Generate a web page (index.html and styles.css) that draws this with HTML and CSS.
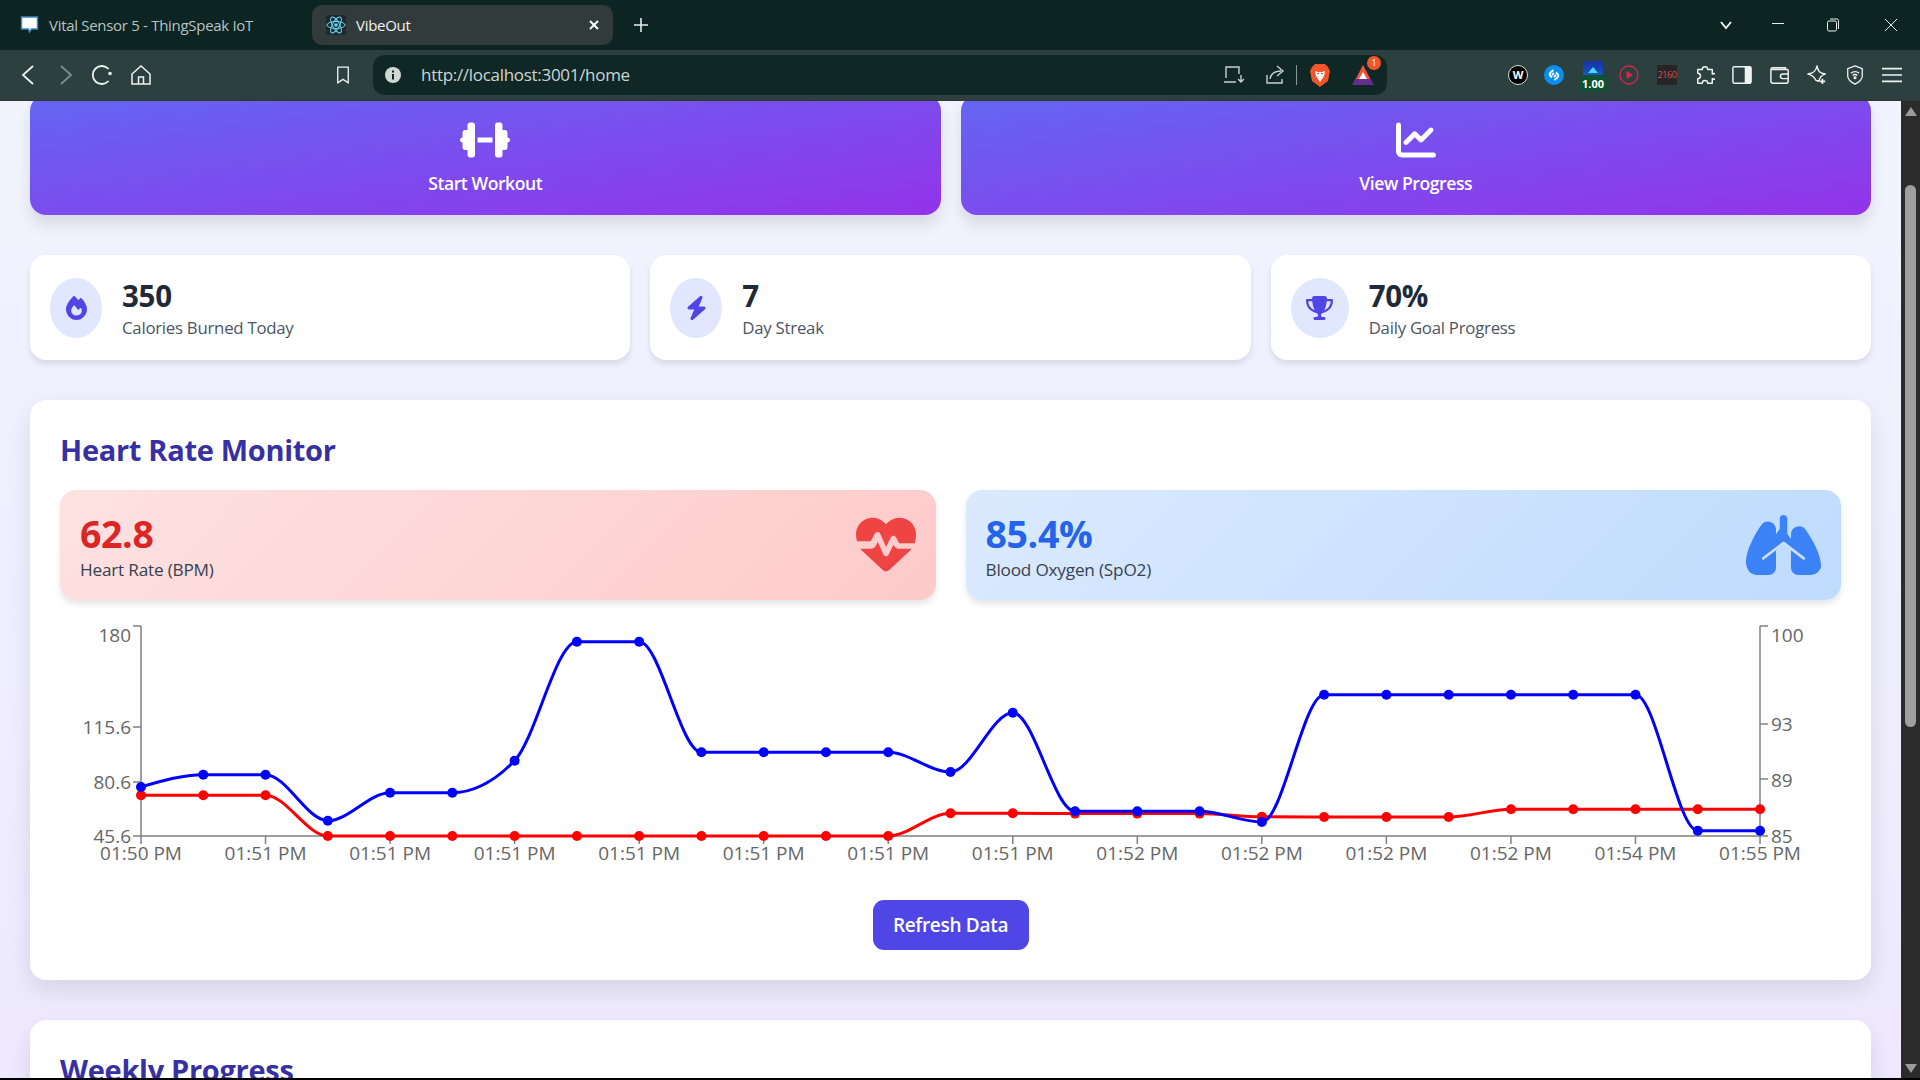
FILE: index.html
```html
<!DOCTYPE html>
<html lang="en">
<head>
  <meta charset="UTF-8">
  <meta name="viewport" content="width=device-width, initial-scale=1.0">
  <title>VibeOut</title>
  <link rel="stylesheet" href="styles.css">
</head>
<body>
<div class="browser">
  <div class="tabbar">
    <div class="tab">
      <svg class="favicon" viewBox="0 0 18 18"><path d="M1 1h16v12h-6l-2 3-1-3H1z" fill="#fff" stroke="#3f83c8" stroke-width="1.4"/></svg>
      <span>Vital Sensor 5 - ThingSpeak IoT</span>
    </div>
    <div class="tab tab-active">
      <svg class="favicon-react" viewBox="0 0 20 20" fill="none" stroke="#61dafb" stroke-width="1">
        <rect width="20" height="20" rx="2" fill="#20282b" stroke="none"/>
        <ellipse cx="10" cy="10" rx="9" ry="3.5"/>
        <ellipse cx="10" cy="10" rx="9" ry="3.5" transform="rotate(60 10 10)"/>
        <ellipse cx="10" cy="10" rx="9" ry="3.5" transform="rotate(120 10 10)"/>
        <circle cx="10" cy="10" r="1.8" fill="#61dafb" stroke="none"/>
      </svg>
      <span class="tab-title">VibeOut</span>
      <svg class="tab-close" viewBox="0 0 12 12" stroke="#fff" stroke-width="2"><path d="M2 2l8 8M10 2l-8 8"/></svg>
    </div>
    <svg class="new-tab" viewBox="0 0 14 14" stroke="#e8ecec" stroke-width="1.6"><path d="M7 0v14M0 7h14"/></svg>
    <div class="window-controls">
      <svg class="win-icon" viewBox="0 0 14 14" fill="none" stroke="#fff" stroke-width="1.8"><path d="M2 4l5 6 5-6"/></svg>
      <svg class="win-icon" viewBox="0 0 14 14" fill="none" stroke="#e8ecec" stroke-width="1"><path d="M1 5.5h12"/></svg>
      <svg class="win-icon" viewBox="0 0 14 14" fill="none" stroke="#e8ecec" stroke-width="1"><rect x="1.5" y="3" width="9" height="10" rx="1.5"/><path d="M4 1h7a1.500 1.500 0 0 1 1.500 1.500V11"/></svg>
      <svg class="win-icon" viewBox="0 0 14 14" fill="none" stroke="#e8ecec" stroke-width="1"><path d="M1 1l12 12M13 1L1 13"/></svg>
    </div>
  </div>

  <div class="toolbar">
    <div class="nav-group">
      <svg class="nav-icon" viewBox="0 0 22 22" fill="none" stroke="#f0f2f2" stroke-width="1.8"><path d="M16 2L6 11l10 9"/></svg>
      <svg class="nav-icon" viewBox="0 0 22 22" fill="none" stroke="#7f8e8c" stroke-width="1.8"><path d="M6 2l10 9-10 9"/></svg>
      <svg class="nav-icon nav-reload" viewBox="0 0 22 22" fill="none" stroke="#f0f2f2" stroke-width="1.8"><path d="M17.500 17a9 9 0 1 1 0-12"/><circle cx="19" cy="9.500" r="1.800" fill="#f0f2f2" stroke="none"/></svg>
      <svg class="nav-icon" viewBox="0 0 22 22" fill="none" stroke="#f0f2f2" stroke-width="1.500"><path d="M2 10l9-8 9 8v10H2zM8.500 20v-7h5v7"/></svg>
    </div>
    <svg class="bookmark" viewBox="0 0 16 20" fill="none" stroke="#f0f2f2" stroke-width="1.500"><path d="M2 1h12v18l-6-4-6 4z"/></svg>
    <div class="urlbar">
      <svg class="info-icon" viewBox="0 0 16 16"><circle cx="8" cy="8" r="8" fill="#d2d7d6"/><path d="M7 7h2v5.500H7zM7 3.500h2v2H7z" fill="#0f2725"/></svg>
      <span class="url-text">http://localhost:3001/home</span>
      <div class="url-actions">
        <svg class="url-icon url-install" viewBox="0 0 22 20" fill="none" stroke="#c9d0cf" stroke-width="1.400"><path d="M3 13V2h13v7M1 17h12M18 10v7m-3-3l3 3 3-3"/></svg>
        <svg class="url-icon" viewBox="0 0 22 20" fill="none" stroke="#c9d0cf" stroke-width="1.400"><path d="M2 10v8h15v-4M5 14c1-6 5-8 11-8M12 1l6 5-6 5"/></svg>
        <span class="url-sep"></span>
        <svg class="brave-icon" viewBox="0 0 20 24"><path d="M5 1h10l3 3 2 4-2 10-8 6-8-6L0 8l2-4z" fill="#f1562b"/><path d="M5 8l3 1h4l3-1-1 5-2 3-2 3-2-3-2-3z" fill="#fff"/><path d="M7 10.500h2M11 10.500h2" stroke="#f1562b" stroke-width="1.200"/></svg>
        <div class="bat-wrap">
          <svg class="bat-icon" viewBox="0 0 22 20"><path d="M11 0l11 20H0z" fill="#662d91"/><path d="M11 0L4 14h14z" fill="#f1562b"/><path d="M11 7l-4 7h8z" fill="#fff"/></svg>
          <span class="bat-badge">1</span>
        </div>
      </div>
    </div>
    <div class="ext-group">
      <div class="ext-w">W</div>
      <svg class="ext-svg ext-shazam" viewBox="0 0 20 20"><circle cx="10" cy="10" r="10" fill="#0c8df0"/><path d="M8 12.500L6.500 11a2.500 2.500 0 0 1 0-3.500L9.500 5M12 7.500L13.500 9a2.500 2.500 0 0 1 0 3.500L10.500 15M8 10l2-2M10 12l2-2" fill="none" stroke="#fff" stroke-width="1.800"/></svg>
      <div class="ext-hdr">
        <span class="ext-hdr-top"></span>
        <span class="ext-hdr-num">1.00</span>
      </div>
      <svg class="ext-svg ext-play" viewBox="0 0 20 20"><circle cx="10" cy="10" r="9" fill="none" stroke="#e0244f" stroke-width="1.300"/><path d="M7.500 6l6.500 4-6.500 4z" fill="#e0244f"/></svg>
      <div class="ext-res">2160</div>
      <svg class="ext-svg" viewBox="0 0 22 22" fill="none" stroke="#f0f2f2" stroke-width="1.600"><path d="M8 5a3 3 0 1 1 6 0h5v5a3 3 0 1 1 0 5v5h-5a3 3 0 1 0-6 0H3v-5a3 3 0 1 0 0-6V5z" stroke-linejoin="round"/></svg>
      <svg class="ext-svg" viewBox="0 0 22 20"><rect x="1" y="1" width="20" height="18" rx="1.500" fill="none" stroke="#f0f2f2" stroke-width="1.600"/><rect x="14" y="1" width="7" height="18" fill="#f0f2f2"/></svg>
      <svg class="ext-svg" viewBox="0 0 22 20" fill="none" stroke="#f0f2f2" stroke-width="1.600"><path d="M17 4V2H3a2 2 0 0 0-2 2v13a2 2 0 0 0 2 2h15a2 2 0 0 0 2-2V5a1 1 0 0 0-1-1H2"/><path d="M20 9h-6a2.500 2.500 0 0 0 0 5h6"/></svg>
      <svg class="ext-svg" viewBox="0 0 22 22" fill="none" stroke="#f0f2f2" stroke-width="1.600"><path d="M11 1c1 6 3 8 9 9-4 1-6 3-7 8-1-1-2-1-3-1C8 13 6 11 1 10c6-1 9-3 10-9z" stroke-linejoin="round"/><path d="M17 15v6M14 18h6" stroke-width="1.800"/></svg>
      <svg class="ext-svg" viewBox="0 0 20 22" fill="none" stroke="#f0f2f2" stroke-width="1.400"><path d="M10 1l8 3v8c0 4-4 7-8 9-4-2-8-5-8-9V4z"/><path d="M5.500 9a6.500 6.500 0 0 1 9 0M7.500 11.500a3.500 3.500 0 0 1 5 0"/><circle cx="10" cy="14" r="1" fill="#f0f2f2"/></svg>
      <svg class="ext-svg" viewBox="0 0 22 18" stroke="#f0f2f2" stroke-width="1.800"><path d="M0 2h22M0 9h22M0 16h22"/></svg>
    </div>
  </div>

  <div class="viewport">
    <div class="page">
      <div class="content">
        <div class="actions">
          <div class="action-card">
            <svg class="action-icon" viewBox="0 0 640 512" fill="#fff"><path d="M96 64c0-17.700 14.300-32 32-32h32c17.700 0 32 14.300 32 32V224v64V448c0 17.700-14.300 32-32 32H128c-17.700 0-32-14.300-32-32V384H64c-17.700 0-32-14.300-32-32V288c-17.700 0-32-14.300-32-32s14.300-32 32-32V160c0-17.700 14.300-32 32-32H96V64zm448 0v64h32c17.700 0 32 14.300 32 32v64c17.700 0 32 14.300 32 32s-14.300 32-32 32v64c0 17.700-14.300 32-32 32H544v64c0 17.700-14.300 32-32 32H480c-17.700 0-32-14.300-32-32V288 224 64c0-17.700 14.300-32 32-32h32c17.700 0 32 14.300 32 32zM416 224v64H224V224H416z"/></svg>
            <span class="action-label">Start Workout</span>
          </div>
          <div class="action-card">
            <svg class="action-icon" viewBox="0 0 512 512" fill="#fff"><path d="M64 64c0-17.700-14.300-32-32-32S0 46.300 0 64V400c0 44.200 35.800 80 80 80H480c17.700 0 32-14.300 32-32s-14.300-32-32-32H80c-8.800 0-16-7.200-16-16V64zm406.600 86.600c12.500-12.500 12.500-32.800 0-45.300s-32.800-12.500-45.300 0L320 210.700l-57.400-57.400c-12.500-12.500-32.800-12.500-45.300 0l-112 112c-12.500 12.500-12.500 32.800 0 45.300s32.800 12.500 45.300 0L240 221.300l57.400 57.400c12.500 12.500 32.800 12.500 45.300 0l128-128z"/></svg>
            <span class="action-label">View Progress</span>
          </div>
        </div>

        <div class="stats">
          <div class="stat-card">
            <div class="stat-icon stat-icon-narrow">
              <svg class="stat-glyph" viewBox="0 0 448 512" fill="#4f46e5"><path d="M159.300 5.400c7.800-7.300 19.900-7.200 27.700 .1c27.600 25.900 53.500 53.800 77.700 84c11-14.400 23.500-30.100 37-42.900c7.900-7.400 20.100-7.400 28 .1c34.600 33 63.900 76.600 84.500 118c20.300 40.800 33.800 82.500 33.800 111.900C448 404.200 348.200 512 224 512C98.400 512 0 404.100 0 276.500c0-38.400 17.800-85.300 45.400-131.700C73.300 97.700 112.700 48.600 159.300 5.400zM225.700 416c25.300 0 47.700-7 68.800-21c42.100-29.400 53.400-88.200 28.100-134.400c-4.500-9-16-9.600-22.500-2l-25.200 29.300c-6.600 7.600-18.500 7.400-24.700-.5c-16.500-21-46-58.500-62.800-79.800c-6.300-8-18.300-8.100-24.700-.1c-33.800 42.500-50.800 69.300-50.800 99.400C112 375.400 162.600 416 225.700 416z"/></svg>
            </div>
            <div class="stat-text">
              <div class="stat-value">350</div>
              <div class="stat-label">Calories Burned Today</div>
            </div>
          </div>
          <div class="stat-card">
            <div class="stat-icon stat-icon-narrow">
              <svg class="stat-glyph" viewBox="0 0 448 512" fill="#4f46e5"><path d="M349.400 44.600c5.900-13.700 1.500-29.700-10.600-38.500s-28.600-8-39.900 1.800l-256 224c-10 8.800-13.600 22.900-8.900 35.300S50.700 288 64 288H175.500L98.600 467.400c-5.900 13.700-1.500 29.700 10.600 38.500s28.600 8 39.900-1.800l256-224c10-8.800 13.600-22.900 8.900-35.300s-18.600-19.300-31.900-19.300H272.500L349.400 44.600z"/></svg>
            </div>
            <div class="stat-text">
              <div class="stat-value">7</div>
              <div class="stat-label">Day Streak</div>
            </div>
          </div>
          <div class="stat-card">
            <div class="stat-icon stat-icon-wide">
              <svg class="stat-glyph" viewBox="0 0 576 512" fill="#4f46e5"><path d="M400 0H176c-26.500 0-48.100 21.800-47.100 48.200c.2 5.300 .4 10.600 .7 15.800H24C10.700 64 0 74.700 0 88c0 92.600 33.500 157 78.500 200.700c44.300 43.100 98.300 64.800 138.100 75.800c23.400 6.500 39.400 26 39.400 45.600c0 20.900-17 37.900-37.900 37.900H192c-17.700 0-32 14.300-32 32s14.300 32 32 32H384c17.700 0 32-14.300 32-32s-14.300-32-32-32H357.900C337 448 320 431 320 410.100c0-19.600 15.900-39.200 39.400-45.600c39.900-11 93.900-32.700 138.200-75.800C542.500 245 576 180.600 576 88c0-13.300-10.700-24-24-24H446.400c.3-5.200 .5-10.400 .7-15.800C448.100 21.800 426.500 0 400 0zM48.900 112h84.400c9.100 90.100 29.200 150.300 51.900 190.600c-24.900-11-50.800-26.500-73.200-48.300c-32-31.100-58-76-63-142.300zM464.100 254.300c-22.400 21.800-48.300 37.300-73.200 48.300c22.700-40.300 42.800-100.500 51.900-190.600h84.400c-5.100 66.300-31.100 111.200-63 142.300z"/></svg>
            </div>
            <div class="stat-text">
              <div class="stat-value">70%</div>
              <div class="stat-label">Daily Goal Progress</div>
            </div>
          </div>
        </div>

        <div class="card">
          <h2 class="card-title">Heart Rate Monitor</h2>
          <div class="vitals">
            <div class="vital vital-heart">
              <div>
                <div class="vital-value">62.8</div>
                <div class="vital-label">Heart Rate (BPM)</div>
              </div>
              <svg class="vital-icon" viewBox="0 0 512 512" fill="#ef4444"><path d="M228.300 469.100L47.600 300.400c-4.200-3.900-8.200-8.100-11.900-12.400h87c22.600 0 43-13.600 51.700-34.500l10.500-25.200 49.300 109.500c3.800 8.500 12.100 14 21.400 14.100s17.800-5 22-13.300L320 253.700l1.700 3.400c9.500 19 28.900 31 50.100 31H476.300c-3.700 4.300-7.700 8.500-11.900 12.400L283.700 469.100c-7.500 7-17.400 10.900-27.700 10.900s-20.200-3.900-27.700-10.900zM503.700 240h-132c-3 0-5.800-1.700-7.200-4.400l-23.200-46.300c-4.100-8.100-12.400-13.300-21.500-13.300s-17.400 5.100-21.500 13.300l-41.400 82.800L205.900 158.200c-3.900-8.700-12.700-14.200-22.200-14.100s-18.100 5.800-21.800 14.600L125.700 224H9.600C3.300 206.800 0 188.300 0 169.600v-5.800C0 94.900 49.800 36.100 117.700 24.800c44.900-7.500 90.600 7.200 122.800 39.400L256 79.600l15.500-15.400c32.200-32.200 77.900-46.900 122.800-39.400C462.200 36.100 512 94.900 512 163.800v5.800c0 24.900-5.800 49.300-8.300 70.400z"/></svg>
            </div>
            <div class="vital vital-oxygen">
              <div>
                <div class="vital-value">85.4%</div>
                <div class="vital-label">Blood Oxygen (SpO2)</div>
              </div>
              <svg class="vital-icon" viewBox="0 0 640 512">
                <path fill="#3b82f6" d="M320 0c17.700 0 32 14.300 32 32V160l32 45V165C384 127 415 96 453 96c22 0 43 10 56 29c15 22 44 65 71 117c26 51 52 112 58 168c1 8 2 17 2 25C640 472 598 512 545 512H448c-35 0-64-29-64-64V300l-64-60-64 60V448c0 35-29 64-64 64H95C42 512 0 472 0 395c0-8 1-17 2-25c6-56 32-117 58-168c27-52 56-95 71-117c13-19 34-29 56-29c38 0 69 31 69 69v40l32-45V32c0-17.700 14.300-32 32-32z"/>
                <path fill="none" stroke="#cbe0fe" stroke-width="22" stroke-linecap="round" stroke-linejoin="round" d="M147 370L320 238 493 370"/>
              </svg>
            </div>
          </div>
          <svg id="chart" class="chart" viewBox="0 0 1781 290"></svg>
          <div class="refresh-row">
            <button class="refresh-btn">Refresh Data</button>
          </div>
        </div>

        <div class="card">
          <h2 class="card-title">Weekly Progress</h2>
        </div>
      </div>
    </div>
    <div class="scrollbar">
      <span class="scroll-arrow scroll-up"></span>
      <div class="scroll-track"><span class="scroll-thumb"></span></div>
      <span class="scroll-arrow scroll-down"></span>
    </div>
  </div>
  <div class="bottom-edge"></div>
</div>
<script src="chart.js"></script>
</body>
</html>
```

FILE: styles.css
```css
* {
  box-sizing: border-box;
}
html, body {
  margin: 0;
  height: 100%;
  overflow: hidden;
}
body {
  font-family: "Open Sans", "Noto Sans", sans-serif;
  color: #1f2937;
}
svg {
  display: block;
  flex: none;
}
.browser {
  display: flex;
  flex-direction: column;
  height: 1080px;
}

/* browser chrome */
.tabbar {
  height: 50px;
  background: #0c2523;
  display: flex;
  align-items: center;
  padding-left: 12px;
  font-size: 15px;
}
.tab {
  width: 300px;
  height: 40px;
  display: flex;
  align-items: center;
  padding-left: 8px;
  color: #b8c3c1;
  border-radius: 10px;
  letter-spacing: -0.3px;
}
.tab-active {
  width: 301px;
  padding-left: 14px;
  background: #323b3b;
  color: #eef1f1;
}
.favicon {
  width: 19px;
  height: 18px;
  margin-right: 10px;
}
.favicon-react {
  width: 20px;
  height: 20px;
  margin-right: 10px;
}
.tab-title {
  flex: 1;
}
.tab-close {
  width: 12px;
  height: 12px;
  margin-right: 13px;
}
.new-tab {
  width: 14px;
  height: 14px;
  margin-left: 21px;
}
.window-controls {
  margin-left: auto;
  display: flex;
  align-items: center;
}
.win-icon {
  width: 14px;
  height: 14px;
  margin-right: 44px;
}
.win-icon:nth-child(1) {
  margin-right: 37.600px;
}
.win-icon:nth-child(2) {
  margin-right: 41.400px;
}
.win-icon:last-child {
  margin-right: 22px;
}
.toolbar {
  height: 50px;
  background: #2c413f;
  display: flex;
  align-items: center;
}
.nav-group {
  display: flex;
  align-items: center;
  padding-left: 17px;
  width: 336px;
}
.nav-icon {
  width: 22px;
  height: 22px;
  margin-right: 16px;
}
.nav-reload {
  margin-left: -2px;
  margin-right: 17px;
}
.bookmark {
  width: 14px;
  height: 20px;
}
.urlbar {
  width: 1014px;
  height: 40px;
  margin-left: 23px;
  padding-left: 12px;
  background: #0f2725;
  border-radius: 12px;
  display: flex;
  align-items: center;
}
.info-icon {
  width: 16px;
  height: 16px;
}
.url-text {
  margin-left: 20px;
  margin-top: -2px;
  font-size: 17px;
  color: #cdd5d3;
  letter-spacing: -0.3px;
}
.url-actions {
  margin-left: auto;
  display: flex;
  align-items: center;
}
.url-icon {
  width: 22px;
  height: 20px;
  margin-right: 21px;
}
.url-install {
  margin-right: 20px;
}
.url-sep {
  width: 1px;
  height: 20px;
  background: #8a9694;
  margin-left: -12px;
  margin-right: 13px;
}
.brave-icon {
  width: 20px;
  height: 24px;
}
.bat-wrap {
  position: relative;
  margin-left: 22px;
  margin-right: 13px;
}
.bat-icon {
  width: 22px;
  height: 20px;
}
.bat-badge {
  position: absolute;
  top: -9px;
  right: -7px;
  width: 14px;
  height: 14px;
  border-radius: 50%;
  background: #f1562b;
  color: #fff;
  font-size: 9px;
  line-height: 14px;
  text-align: center;
}
.ext-group {
  display: flex;
  align-items: center;
  margin-left: 121px;
}
.ext-group > * {
  margin-right: 17.500px;
}
.ext-group > .ext-w {
  margin-right: 16px;
}
.ext-group > .ext-shazam {
  margin-right: 15.500px;
}
.ext-group > .ext-hdr {
  margin-right: 12.500px;
}
.ext-group > .ext-play {
  margin-right: 18px;
}
.ext-w {
  width: 20px;
  height: 20px;
  border-radius: 50%;
  background: #000;
  border: 1px solid #ddd;
  color: #fff;
  font-size: 11px;
  font-weight: 700;
  line-height: 18px;
  text-align: center;
}
.ext-svg {
  width: 20px;
  height: 20px;
}
.ext-hdr {
  position: relative;
  width: 27px;
  height: 30px;
  margin-top: 4px;
}
.ext-hdr-top {
  position: absolute;
  top: -1px;
  left: 3px;
  width: 20px;
  height: 14px;
  background: linear-gradient(#1a2fa8, #1558c0);
  border-radius: 2px 2px 0 0;
}
.ext-hdr-top::after {
  content: "";
  position: absolute;
  left: 5px;
  bottom: 2px;
  border-left: 5px solid transparent;
  border-right: 5px solid transparent;
  border-bottom: 6px solid #4fd6e8;
}
.ext-hdr-num {
  position: absolute;
  left: 0;
  bottom: 0;
  width: 27px;
  height: 17px;
  border-radius: 4px;
  background: #0f5132;
  color: #fff;
  font-size: 11px;
  font-weight: 700;
  line-height: 17px;
  text-align: center;
}
.ext-res {
  width: 20px;
  height: 20px;
  background: #262626;
  color: #e0484d;
  font-size: 9px;
  line-height: 20px;
  text-align: center;
  letter-spacing: -0.4px;
}

/* page */
.viewport {
  flex: 1;
  min-height: 0;
  display: flex;
  border-top: 1px solid #333;
}
.page {
  flex: 1;
  overflow: hidden;
  background: linear-gradient(180deg, #f1f4ff, #eee9fe);
}
.content {
  margin-top: -6px;
  padding: 0 30px;
  display: flex;
  flex-direction: column;
  gap: 40px;
}
.actions {
  display: grid;
  grid-template-columns: 1fr 1fr;
  gap: 20px;
}
.action-card {
  height: 120px;
  padding-top: 25px;
  border-radius: 16px;
  background: linear-gradient(to bottom right, #6366f1, #9333ea);
  box-shadow: 0 10px 15px rgba(0, 0, 0, 0.1);
  color: #fff;
  display: flex;
  flex-direction: column;
  align-items: center;
}
.action-icon {
  height: 40px;
}
.action-label {
  margin-top: 11px;
  font-size: 17.600px;
  font-weight: 600;
  letter-spacing: -0.45px;
}
.stats {
  display: grid;
  grid-template-columns: repeat(3, 1fr);
  gap: 20px;
}
.stat-card {
  height: 105px;
  padding: 0 20px;
  background: #fff;
  border-radius: 16px;
  box-shadow: 0 4px 6px rgba(0, 0, 0, 0.1);
  display: flex;
  align-items: center;
  gap: 20px;
}
.stat-icon {
  height: 60px;
  border-radius: 50%;
  background: #e0e7ff;
  display: flex;
  align-items: center;
  justify-content: center;
}
.stat-icon-narrow {
  width: 52px;
}
.stat-icon-wide {
  width: 58px;
}
.stat-glyph {
  height: 24px;
}
.stat-text {
  padding-top: 2px;
}
.stat-value {
  font-size: 29.500px;
  font-weight: 700;
  line-height: 38px;
  letter-spacing: -0.3px;
}
.stat-label {
  font-size: 16.800px;
  line-height: 25px;
  color: #4b5563;
  letter-spacing: -0.25px;
}
.card {
  height: 580px;
  padding: 30px;
  background: #fff;
  border-radius: 16px;
  box-shadow: 0 10px 25px rgba(0, 0, 0, 0.1);
}
.card-title {
  margin: 0 0 20px;
  font-size: 29px;
  font-weight: 700;
  line-height: 40px;
  color: #3730a3;
  letter-spacing: -0.3px;
}
.vitals {
  display: grid;
  grid-template-columns: 1fr 1fr;
  gap: 30px;
}
.vital {
  height: 110px;
  padding: 0 20px;
  border-radius: 16px;
  box-shadow: 0 4px 6px rgba(0, 0, 0, 0.1);
  display: flex;
  align-items: center;
  justify-content: space-between;
}
.vital-heart {
  background: linear-gradient(135deg, #fee2e2, #fecaca);
}
.vital-oxygen {
  background: linear-gradient(135deg, #dbeafe, #bfdbfe);
}
.vital-value {
  font-size: 37.500px;
  font-weight: 700;
  line-height: 49px;
  letter-spacing: -0.4px;
}
.vital-heart .vital-value {
  color: #dc2626;
}
.vital-oxygen .vital-value {
  color: #2563eb;
}
.vital-label {
  font-size: 17.200px;
  line-height: 23px;
  color: #374151;
  letter-spacing: -0.2px;
}
.vital-icon {
  height: 60px;
}
.chart {
  width: 1781px;
  height: 290px;
  margin-top: 10px;
}
.tick-label {
  font-size: 19px;
  fill: #666;
}
.axis {
  stroke: #808080;
  stroke-width: 1.500;
  fill: none;
}
.refresh-row {
  display: flex;
  justify-content: center;
}
.refresh-btn {
  width: 156px;
  height: 50px;
  border: none;
  border-radius: 11px;
  background: #4f46e5;
  color: #fff;
  font-family: inherit;
  font-size: 19px;
  font-weight: 600;
  letter-spacing: -0.3px;
}

/* scrollbar */
.scrollbar {
  width: 19px;
  background: #2b2b2b;
  display: flex;
  flex-direction: column;
  align-items: center;
  padding: 6px 0 5px;
}
.scroll-arrow {
  width: 0;
  height: 0;
  border-left: 6px solid transparent;
  border-right: 6px solid transparent;
}
.scroll-up {
  border-bottom: 9px solid #9a9a9a;
}
.scroll-down {
  border-top: 9px solid #9a9a9a;
}
.scroll-track {
  flex: 1;
  width: 11px;
  padding-top: 69px;
}
.scroll-thumb {
  display: block;
  height: 542px;
  border-radius: 6px;
  background: #9f9f9f;
}
.bottom-edge {
  height: 2px;
  background: #000;
}
```

FILE: chart.js
```js
const SVG_NS = 'http://www.w3.org/2000/svg';
const chart = document.getElementById('chart');

const X0 = 81;
const STEP = 62.27;
const AXIS_TOP = 16;
const AXIS_BOTTOM = 226;
const AXIS_RIGHT = 1700;

// readings already scaled to chart pixels
const spo2 = [177, 164.7, 164.7, 210.7, 182.7, 182.7, 150.7, 31.7, 31.7, 142.3, 142.3, 142.3, 142.3, 162, 102.7, 201.3, 201.3, 201.3, 212, 84.7, 84.7, 84.7, 84.7, 84.7, 84.7, 220.7, 220.7];
const heart = [185.3, 185.3, 185.3, 226, 226, 226, 226, 226, 226, 226, 226, 226, 226, 203.3, 203.3, 203.6, 203.6, 203.6, 206.8, 207, 207, 207, 199.3, 199.3, 199.3, 199.3, 199.3];

const times = ['01:50 PM', '01:51 PM', '01:51 PM', '01:51 PM', '01:51 PM', '01:51 PM', '01:51 PM', '01:51 PM', '01:52 PM', '01:52 PM', '01:52 PM', '01:52 PM', '01:54 PM', '01:55 PM'];
const leftTicks = [[16, 25, '180'], [117, 117, '115.6'], [172, 172, '80.6'], [226, 226, '45.6']];
const rightTicks = [[16, 25, '100'], [114, 114, '93'], [169, 170, '89'], [226, 226, '85']];

function add(tag, attrs, text) {
  const el = document.createElementNS(SVG_NS, tag);
  for (const key in attrs) el.setAttribute(key, attrs[key]);
  if (text) el.textContent = text;
  chart.appendChild(el);
  return el;
}

function xAt(i) {
  return X0 + i * STEP;
}

// same shape as d3 curveMonotoneX
function monotonePath(ys) {
  const slopes = [];
  for (let i = 0; i < ys.length - 1; i++) slopes.push((ys[i + 1] - ys[i]) / STEP);
  const tangents = [];
  for (let i = 1; i < ys.length - 1; i++) {
    const a = slopes[i - 1];
    const b = slopes[i];
    const p = (a + b) / 2;
    tangents[i] = (Math.sign(a) + Math.sign(b)) * Math.min(Math.abs(a), Math.abs(b), 0.5 * Math.abs(p)) || 0;
  }
  tangents[0] = (3 * slopes[0] - tangents[1]) / 2;
  const last = ys.length - 1;
  tangents[last] = (3 * slopes[last - 1] - tangents[last - 1]) / 2;

  let d = 'M' + xAt(0) + ',' + ys[0];
  for (let i = 0; i < last; i++) {
    const dx = STEP / 3;
    d += 'C' + (xAt(i) + dx) + ',' + (ys[i] + dx * tangents[i]) + ' ' + (xAt(i + 1) - dx) + ',' + (ys[i + 1] - dx * tangents[i + 1]) + ' ' + xAt(i + 1) + ',' + ys[i + 1];
  }
  return d;
}

function drawLine(ys, color) {
  add('path', { d: monotonePath(ys), fill: 'none', stroke: color, 'stroke-width': 3 });
  ys.forEach((y, i) => add('circle', { cx: xAt(i), cy: y, r: 5, fill: color }));
}

add('path', { class: 'axis', d: `M${X0} ${AXIS_BOTTOM}H${AXIS_RIGHT}M${X0} ${AXIS_TOP}V${AXIS_BOTTOM}M${AXIS_RIGHT} ${AXIS_TOP}V${AXIS_BOTTOM}` });

times.forEach((time, n) => {
  const x = xAt(n * 2);
  add('path', { class: 'axis', d: `M${x} ${AXIS_BOTTOM}v8` });
  add('text', { class: 'tick-label', x: x, y: 250, 'text-anchor': 'middle' }, time);
});
leftTicks.forEach(([y, labelY, label]) => {
  add('path', { class: 'axis', d: `M${X0} ${y}h-8` });
  add('text', { class: 'tick-label', x: X0 - 10, y: labelY + 7, 'text-anchor': 'end' }, label);
});
rightTicks.forEach(([y, labelY, label]) => {
  add('path', { class: 'axis', d: `M${AXIS_RIGHT} ${y}h8` });
  add('text', { class: 'tick-label', x: AXIS_RIGHT + 11, y: labelY + 7 }, label);
});

drawLine(heart, '#f00');
drawLine(spo2, '#00f');
```
